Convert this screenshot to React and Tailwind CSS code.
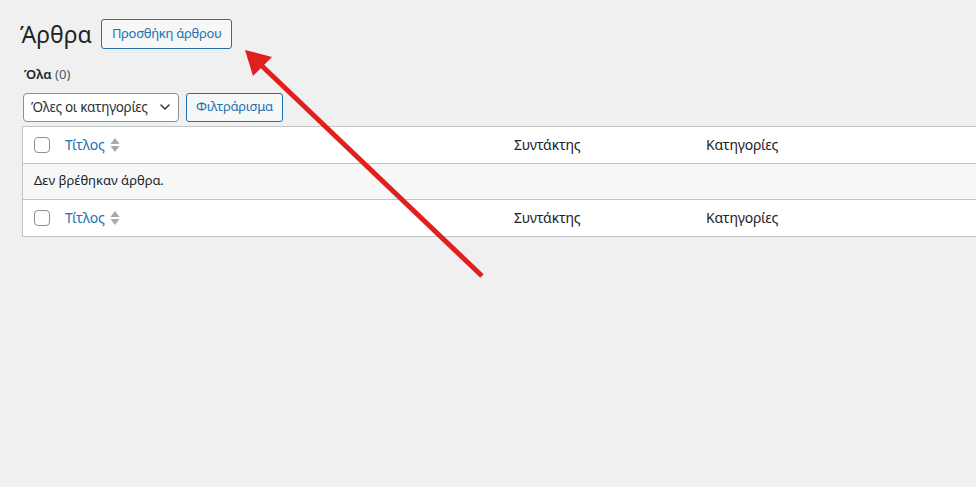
import { ChevronDown } from 'lucide-react';

const font = { fontFamily: '"Segoe UI", "Noto Sans", "Open Sans", sans-serif' };

function SortIcon() {
  return (
    <svg width="10" height="18" viewBox="0 0 10 18" className="ml-[5px]">
      <path d="M0.5 8 L5 2 L9.5 8 Z" fill="#a7aaad" />
      <path d="M0.5 10 L5 16 L9.5 10 Z" fill="#a7aaad" />
    </svg>
  );
}

function Checkbox() {
  return <span className="block h-4 w-4 rounded-[4px] border border-[#8c8f94] bg-white" />;
}

function HeaderRow({ top }) {
  return (
    <div
      className={`flex h-[37px] items-center bg-white text-[14px] tracking-[-0.2px] text-[#1d2327] ${
        top ? 'border-b border-[#c3c4c7]' : 'border-t border-[#c3c4c7]'
      }`}
    >
      <div className="w-[42px] pl-[11px]">
        <Checkbox />
      </div>
      <div className="flex w-[449px] items-center text-[#2271b1]">
        Τίτλος
        <SortIcon />
      </div>
      <div className="w-[192px]">Συντάκτης</div>
      <div>Κατηγορίες</div>
    </div>
  );
}

export default function App() {
  return (
    <div className="relative h-[487px] w-full overflow-hidden bg-[#f0f0f1]" style={font}>
      <div className="pl-5 pt-[19px]">
        <div className="flex items-center gap-[9px]">
          <h1 className="text-[23px] leading-[29px] text-[#1d2327]">Άρθρα</h1>
          <button className="h-[30px] rounded-[3px] border border-[#2271b1] bg-[#f6f7f7] px-[10px] text-[13px] tracking-[-0.3px] text-[#2271b1]">
            Προσθήκη άρθρου
          </button>
        </div>

        <div className="mt-[16px] pl-[4px] text-[13px] text-[#1d2327]">
          <span className="font-semibold">Όλα</span> <span className="text-[#50575e]">(0)</span>
        </div>

        <div className="mt-[8px] flex items-center gap-[7px] pl-[3px]">
          <div className="flex h-[29px] w-[156px] items-center justify-between whitespace-nowrap rounded-[4px] border border-[#8c8f94] bg-white pl-[7px] pr-[5px] text-[13.5px] tracking-[-0.3px] text-[#2c3338]">
            Όλες οι κατηγορίες
            <ChevronDown size={16} strokeWidth={2.2} className="shrink-0 text-[#2c3338]" />
          </div>
          <button className="h-[29px] rounded-[3px] border border-[#2271b1] bg-[#f6f7f7] px-[9px] text-[13px] tracking-[-0.3px] text-[#2271b1]">
            Φιλτράρισμα
          </button>
        </div>

        <div className="mt-[4px] ml-[2px] -mr-10 border border-[#c3c4c7] bg-white">
          <HeaderRow top />
          <div className="flex h-[35px] items-center bg-[#f6f7f7] pl-[11px] text-[13px] text-[#1d2327]">
            Δεν βρέθηκαν άρθρα.
          </div>
          <HeaderRow />
        </div>
      </div>

      {/* red pointer towards the add button */}
      <svg className="pointer-events-none absolute left-0 top-0" width="976" height="487">
        <line x1="482" y1="276" x2="262" y2="66" stroke="#e0201f" strokeWidth="5" />
        <path d="M245 50 L272 57 L253 76 Z" fill="#e0201f" />
      </svg>
    </div>
  );
}
